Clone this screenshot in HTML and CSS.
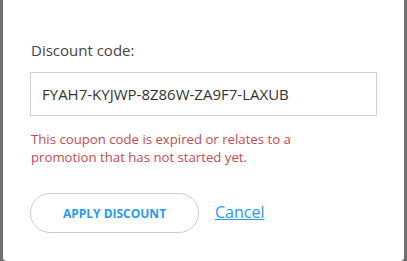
FILE: index.html
```html
<!DOCTYPE html>
<html>
<head>
<meta charset="utf-8">
<link rel="stylesheet" href="styles.css">
</head>
<body>
<div class="modal">
  <label class="label" for="code">Discount code:</label>
  <input id="code" class="input" type="text" value="FYAH7-KYJWP-8Z86W-ZA9F7-LAXUB">
  <p class="error">This coupon code is expired or relates to a promotion that has not started yet.</p>
  <div class="actions">
    <button class="apply">APPLY DISCOUNT</button>
    <a class="cancel" href="#">Cancel</a>
  </div>
</div>
</body>
</html>
```
FILE: styles.css
```css
html, body {
  margin: 0;
  padding: 0;
  height: 100%;
}
body {
  background: #707070;
  font-family: "Open Sans", sans-serif;
  overflow: hidden;
}
.modal {
  margin: 0 3px;
  height: 261px;
  box-sizing: border-box;
  background: #fff;
  border-radius: 0 0 4px 4px;
  padding: 40px 27px 0 27px;
  display: flex;
  flex-direction: column;
}
.label {
  font-size: 15px;
  line-height: 20px;
  color: #444;
  padding-left: 1px;
}
.input {
  margin-top: 12px;
  width: 347px;
  height: 44px;
  box-sizing: border-box;
  border: 1px solid #d0d0d0;
  padding: 0 11px;
  font-family: "Open Sans", sans-serif;
  font-size: 15px;
  color: #333;
  outline: none;
}
.error {
  margin: 14px 0 0 1px;
  font-size: 13.2px;
  line-height: 18px;
  color: #c44b50;
  width: 300px;
}
.actions {
  margin-top: 27px;
  display: flex;
  align-items: center;
  gap: 16px;
}
.apply {
  width: 169px;
  height: 40px;
  border: 1px solid #ccc;
  border-radius: 20px;
  background: #fff;
  font-family: "Open Sans", sans-serif;
  font-weight: 700;
  font-size: 12px;
  color: #2a9af0;
  padding: 0;
}
.cancel {
  font-size: 16px;
  color: #2a9af0;
  text-decoration: underline;
  padding-bottom: 2px;
}
```
